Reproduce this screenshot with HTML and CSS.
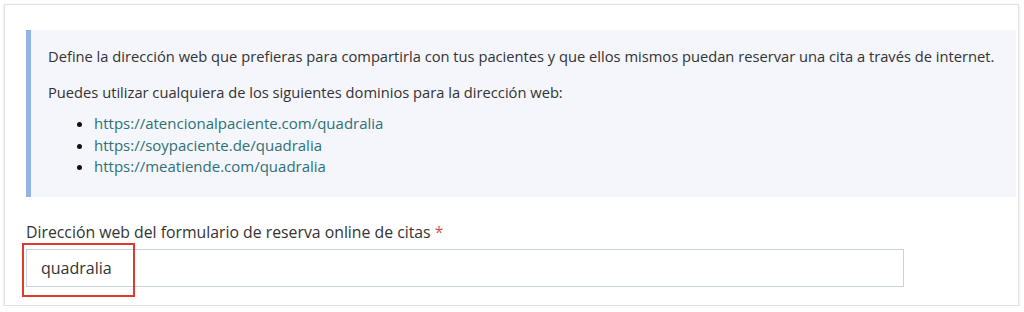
FILE: index.html
```
<!DOCTYPE html>
<html lang="es">

<head>
    <meta charset="UTF-8">
    <meta name="viewport" content="width=device-width, initial-scale=1.0">
    <title>Reserva online de citas</title>
    <link rel="stylesheet" href="styles.css">
</head>

<body>
    <div class="card">
        <!-- Información -->
        <div class="info-box">
            <p>Define la dirección web que prefieras para compartirla con tus pacientes y que ellos mismos puedan reservar una cita a través de internet.</p>
            <p>Puedes utilizar cualquiera de los siguientes dominios para la dirección web:</p>
            <ul>
                <li><a href="#">https://atencionalpaciente.com/quadralia</a></li>
                <li><a href="#">https://soypaciente.de/quadralia</a></li>
                <li><a href="#">https://meatiende.com/quadralia</a></li>
            </ul>
        </div>

        <!-- Campo -->
        <label for="webAddress">Dirección web del formulario de reserva online de citas <span class="required">*</span></label>
        <div class="field">
            <input type="text" id="webAddress" value="quadralia">
            <div class="highlight"></div>
        </div>
    </div>
</body>

</html>
```

FILE: styles.css
```
body {
    font-family: "Open Sans", "Noto Sans", Arial, sans-serif;
    font-size: 14.7px;
    color: #333;
    margin: 0;
    padding: 4px 5px 0 4px;
    background-color: #fff;
}

.card {
    height: 302px;
    box-sizing: border-box;
    padding: 25px 2px 0 21px;
    border: 1px solid #e2e2e2;
    box-shadow: 0 1px 3px rgba(0, 0, 0, 0.12);
    background-color: white;
}

.info-box {
    background-color: #f4f6fb;
    border-left: 5px solid #92b4e3;
    padding: 16px 17px 19px 17px;
}

.info-box p {
    margin: 0 0 15px 0;
    line-height: 21px;
}

.info-box p + ul {
    margin-top: -5px;
}

.info-box ul {
    margin: 0;
    padding-left: 46px;
}

.info-box li {
    line-height: 21.5px;
    font-size: 15px;
    color: #111;
}

.info-box a {
    color: #2f7077;
    text-decoration: none;
}

label {
    display: block;
    margin-top: 24px;
    margin-bottom: 6px;
    line-height: 22px;
    font-size: 15.8px;
}

.required {
    color: #d9534f;
}

.field {
    position: relative;
    width: 878px;
}

input {
    width: 100%;
    height: 38px;
    box-sizing: border-box;
    padding: 0 14px;
    border: 1px solid #c9d1e2;
    font-family: "Open Sans", "Noto Sans", Arial, sans-serif;
    font-size: 16px;
    color: #333;
    outline: none;
}

.highlight {
    position: absolute;
    left: -4px;
    top: -6px;
    width: 113px;
    height: 54px;
    box-sizing: border-box;
    border: 2px solid #e0392b;
}
```
